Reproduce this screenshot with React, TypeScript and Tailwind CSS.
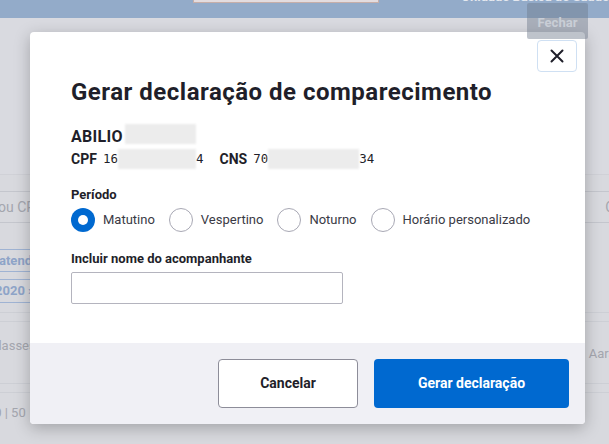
import React from 'react';

const sans = { fontFamily: 'Roboto, "Noto Sans", sans-serif' };
const mono = { fontFamily: '"DejaVu Sans Mono", monospace', fontSize: 12.5 };

function Radio({ checked, label }: { checked?: boolean; label: string }) {
  return (
    <label className="flex items-center gap-[8px] whitespace-nowrap">
      {checked ? (
        <span className="w-[24px] h-[24px] rounded-full bg-[#0069d0] flex items-center justify-center">
          <span className="w-[10px] h-[10px] rounded-full bg-white" />
        </span>
      ) : (
        <span className="w-[24px] h-[24px] rounded-full border border-[#a8a8b4] bg-white" />
      )}
      <span className="text-[13px] text-[#3a3a45]">{label}</span>
    </label>
  );
}

function Blur({ w }: { w: number }) {
  return <span className="inline-block h-[20px] bg-[#ececec] blur-[1px]" style={{ width: w }} />;
}

export default function App() {
  return (
    <div className="relative w-[609px] h-[444px] overflow-hidden bg-[#d8d9de]" style={sans}>
      {/* page behind the overlay */}
      <div className="h-[18px] bg-[#93abc9] flex items-start">
        <div className="ml-[193px] w-[207px] h-[3px] bg-[#e3dcdf] border-b border-x border-[#c6aea9]" />
        <div className="ml-[82px] -mt-[13px] text-[13px] font-bold text-[#e4e8ef] whitespace-nowrap">
          Unidade Básica de Saúde
        </div>
      </div>
      <div className="h-[157px] bg-[#d9dae0] border-b border-[#d0d1d7]" />
      <div className="h-[16px]" />
      <div className="h-[32px] border-y border-[#c4c6cd] flex items-center justify-between text-[14px] text-[#a4a6ae]">
        <span className="-ml-[2px]">ou CPF</span>
        <span className="-mr-[22px]">CPF</span>
      </div>
      <div className="h-[26px]" />
      <div className="flex flex-col gap-[7px] items-start">
        <span className="-ml-[10px] h-[23px] px-[8px] border border-[#9fb3d3] text-[13px] font-bold text-[#8ea4c8] flex items-center">
          atendimento
        </span>
        <span className="-ml-[14px] h-[24px] px-[8px] border border-[#9fb3d3] text-[13px] font-bold text-[#8ea4c8] flex items-center">
          2020 ›
        </span>
      </div>
      <div className="mt-[9px] h-[10px] border-y border-[#cdcfd5]" />
      <div className="h-[61px] flex justify-between items-start pt-[14px] text-[13px] text-[#a4a6ae]">
        <span className="-ml-[10px]">Classes</span>
        <span className="-mr-[14px] pt-[8px]">Aarão</span>
      </div>
      <div className="h-[10px] border-y border-[#cdcfd5]" />
      <div className="pt-[10px] text-[13px] text-[#a4a6ae] -ml-[6px]">
        <span className="font-bold">0</span> | 50
      </div>

      {/* modal */}
      <div className="absolute left-[30px] top-[32px] w-[555px] h-[392px] bg-white rounded-[4px] shadow-[0_4px_16px_rgba(0,0,0,0.25)] flex flex-col overflow-hidden">
        <div className="flex-1 relative px-[41px] pt-[46px]">
          <button className="absolute right-[8px] top-[8px] w-[40px] h-[32px] rounded-[4px] border border-[#cfe0f3] bg-white flex items-center justify-center">
            <svg width="14" height="14" viewBox="0 0 14 14">
              <path d="M1.5 1.5L12.5 12.5M12.5 1.5L1.5 12.5" stroke="#1f1f2a" strokeWidth="2" strokeLinecap="round" />
            </svg>
          </button>
          <h1 className="text-[24px] leading-[28px] font-bold text-[#1f1f2a] tracking-[0.5px]">
            Gerar declaração de comparecimento
          </h1>
          <div className="mt-[21px] flex items-center h-[20px]">
            <span className="text-[16px] font-bold text-[#1f1f2a] tracking-[0.3px]">ABILIO</span>
            <span className="ml-[2px]"><Blur w={71} /></span>
          </div>
          <div className="mt-[2px] flex items-center text-[14px] text-[#1f1f2a] h-[20px]">
            <span className="font-bold">CPF</span>
            <span className="ml-[6px] flex items-center" style={mono}>
              16<Blur w={78} />4
            </span>
            <span className="ml-[16px] font-bold">CNS</span>
            <span className="ml-[6px] flex items-center" style={mono}>
              70<Blur w={91} />34
            </span>
          </div>
          <div className="mt-[17px] text-[13px] font-bold text-[#1f1f2a] leading-[18px]">Período</div>
          <div className="mt-[4px] flex items-center gap-[14px]">
            <Radio checked label="Matutino" />
            <Radio label="Vespertino" />
            <Radio label="Noturno" />
            <Radio label="Horário personalizado" />
          </div>
          <div className="mt-[18px] text-[13px] font-bold text-[#1f1f2a] leading-[18px]">Incluir nome do acompanhante</div>
          <input className="mt-[4px] block w-[272px] h-[32px] border border-[#b4b4be] rounded-[2px] bg-white" />
        </div>
        <div className="h-[81px] bg-[#f0f0f5] flex items-center justify-end gap-[16px] pr-[16px]">
          <button className="w-[140px] h-[49px] rounded-[4px] border border-[#8d8d99] bg-white text-[14px] font-bold text-[#1f1f2a]">
            Cancelar
          </button>
          <button className="w-[195px] h-[49px] rounded-[4px] bg-[#0069d0] text-[14px] font-bold text-white">
            Gerar declaração
          </button>
        </div>
      </div>

      {/* tooltip of the close button, dimmed with the page */}
      <div className="absolute left-[527px] top-[3px] w-[61px] h-[36px] bg-[#6f7a8c]/45 rounded-[2px] flex items-start justify-center pt-[10px]">
        <span className="text-[13px] font-bold text-[#c9ced6] whitespace-nowrap">Fechar</span>
      </div>
    </div>
  );
}
